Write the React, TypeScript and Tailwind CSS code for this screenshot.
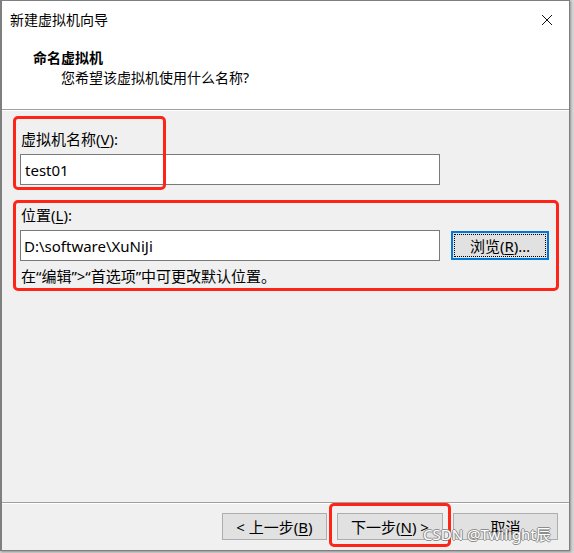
export default function App() {
  const font = "font-['Noto_Sans','Noto_Sans_CJK_SC',sans-serif]";

  return (
    <div className={`relative w-[574px] h-[553px] bg-[#d4d4d4] text-[14px] text-black ${font}`}>
      {/* dialog window */}
      <div className="w-[570px] h-[551px] border border-[#7f7f7f] border-l-2 bg-[#f0f0f0] flex flex-col shadow-[1px_1px_2px_rgba(0,0,0,0.3)]">
        {/* title bar */}
        <div className="h-[37px] bg-white flex items-center justify-between pl-[8px] pr-[13px] shrink-0">
          <span className="leading-[20px]">新建虚拟机向导</span>
          <svg width="12" height="12" viewBox="0 0 12 12" className="mr-[3px]">
            <path d="M1 1 L11 11 M11 1 L1 11" stroke="#111" strokeWidth="1" />
          </svg>
        </div>
        {/* header */}
        <div className="h-[72px] bg-white border-b border-[#a0a0a0] shrink-0 pt-[10px]">
          <div className="pl-[31px] font-bold leading-[20px]">命名虚拟机</div>
          <div className="pl-[59px] leading-[20px]">您希望该虚拟机使用什么名称?</div>
        </div>
        {/* body */}
        <div className="flex-1 border-t border-white pl-[18px] pt-[18px] text-[15px]">
          <div className="pl-[1px] leading-[20px]">
            虚拟机名称(<span className="underline underline-offset-2">V</span>):
          </div>
          <div className="mt-[5px] w-[420px] h-[31px] bg-white border border-[#7a7a7a] flex items-center pl-[4px] leading-[20px]">
            test01
          </div>
          <div className="mt-[20px] pl-[1px] leading-[20px]">
            位置(<span className="underline underline-offset-2">L</span>):
          </div>
          <div className="mt-[5px] flex items-center gap-[11px]">
            <div className="w-[420px] h-[31px] bg-white border border-[#7a7a7a] flex items-center pl-[3px] leading-[20px]">
              D:\software\XuNiJi
            </div>
            <div className="w-[98px] h-[29px] border-2 border-[#0078d7] bg-[#e1e1e1] p-[1px]">
              <div className="w-full h-full border border-dotted border-black flex items-center justify-center leading-[20px]">
                浏览(<span className="underline underline-offset-2">R</span>)…
              </div>
            </div>
          </div>
          <div className="mt-[5px] pl-[1px] leading-[20px]">
            在“编辑”&gt;“首选项”中可更改默认位置。
          </div>
        </div>
        {/* footer */}
        <div className="h-[48px] shrink-0 border-t border-[#a0a0a0] flex justify-end items-start pt-[10px] pr-[11px] gap-[10px] text-[15px] shadow-[inset_0_1px_0_#ffffff]">
          <div className="w-[105px] h-[27px] bg-[#e1e1e1] border border-[#adadad] flex items-center justify-center leading-[20px]">
            &lt; 上一步(<span className="underline underline-offset-2">B</span>)
          </div>
          <div className="w-[106px] h-[27px] bg-[#e1e1e1] border border-[#adadad] flex items-center justify-center leading-[20px]">
            下一步(<span className="underline underline-offset-2">N</span>) &gt;
          </div>
          <div className="w-[105px] h-[27px] bg-[#e1e1e1] border border-[#adadad] flex items-center justify-center leading-[20px]">
            取消
          </div>
        </div>
      </div>

      {/* red annotation boxes */}
      <div className="absolute left-[13px] top-[116px] w-[153px] h-[74px] border-[3px] border-[#ff2418] rounded-[5px]" />
      <div className="absolute left-[13px] top-[200px] w-[546px] h-[91px] border-[3px] border-[#ff2418] rounded-[5px]" />
      <div className="absolute left-[329px] top-[503px] w-[122px] h-[44px] border-[3px] border-[#ff2418] rounded-[5px]" />

      {/* watermark */}
      <div className="absolute left-[423px] top-[524px] text-[15px] leading-[20px] text-white [text-shadow:1px_0_0_#8c8c8c,-1px_0_0_#8c8c8c,0_1px_0_#8c8c8c,0_-1px_0_#8c8c8c]">
        CSDN @Twilight辰
      </div>
    </div>
  );
}
